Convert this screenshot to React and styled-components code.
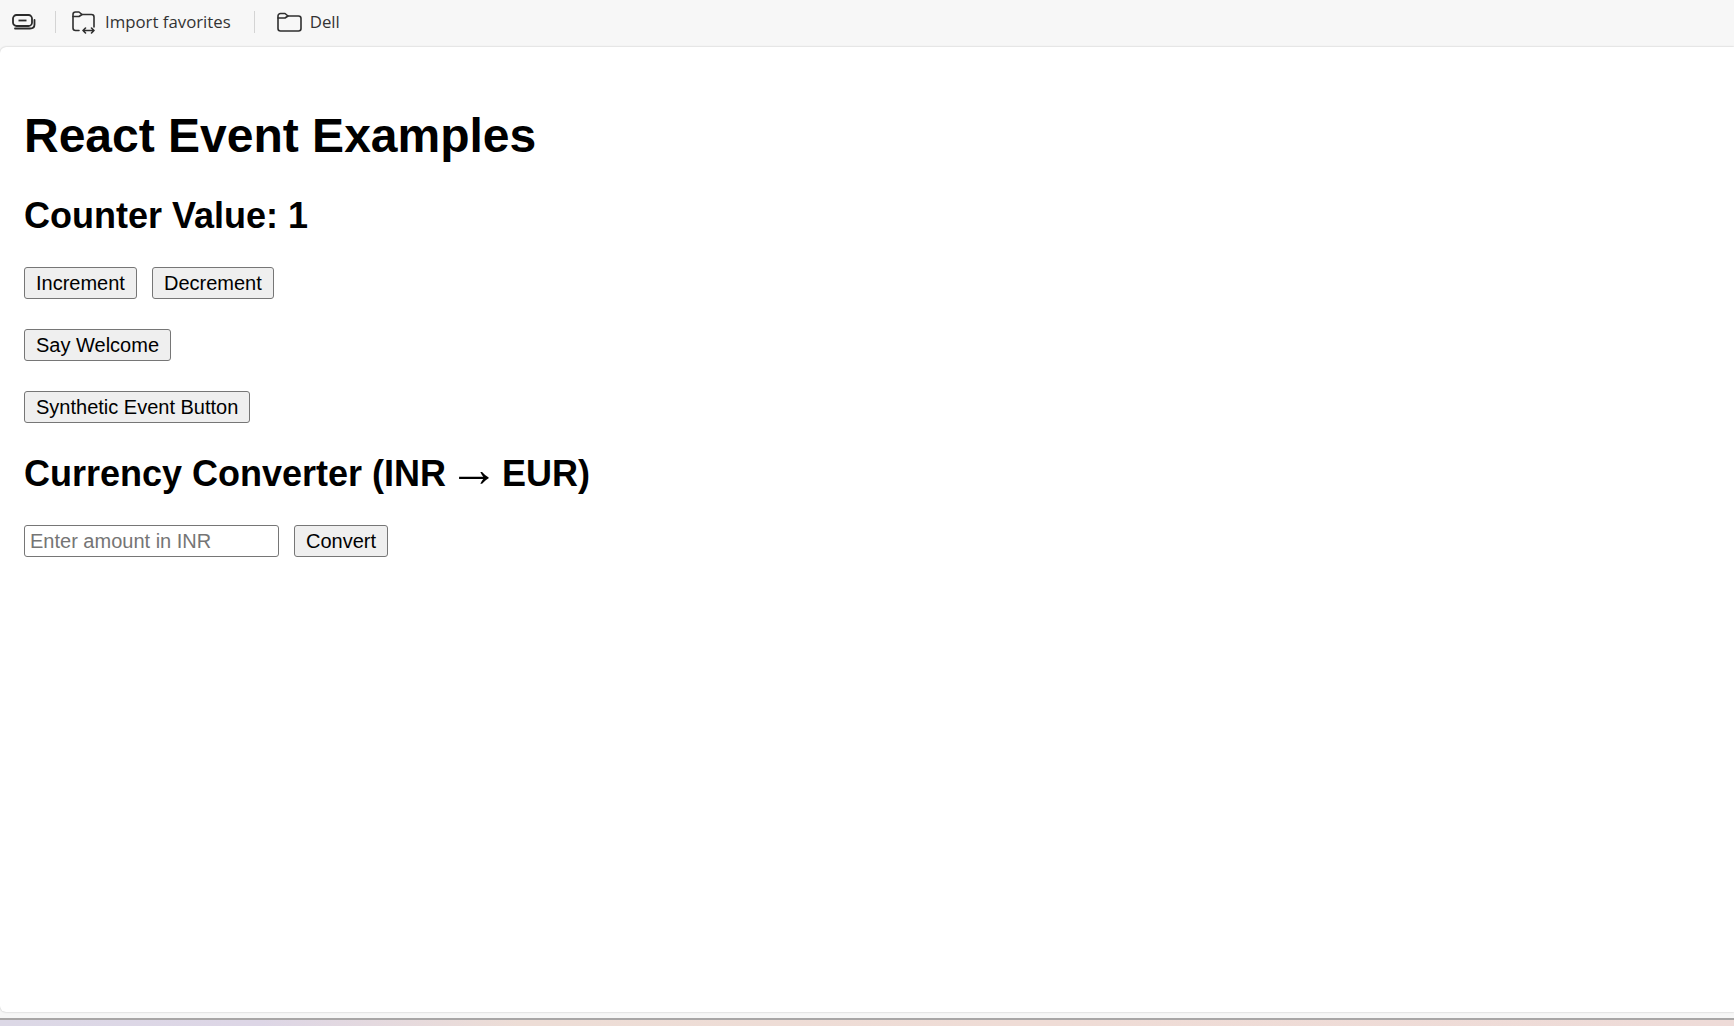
import React from "react";
import styled, { createGlobalStyle } from "styled-components";

const GlobalStyle = createGlobalStyle`
  html, body {
    margin: 0;
    padding: 0;
    background: #f7f7f7;
  }
`;

const Window = styled.div`
  display: flex;
  flex-direction: column;
  width: 1734px;
  height: 1026px;
  overflow: hidden;
  background: #f7f7f7;
`;

const FavoritesBar = styled.div`
  display: flex;
  align-items: center;
  box-sizing: border-box;
  height: 47px;
  padding: 0 0 4px 12px;
  flex-shrink: 0;
  font-family: "Open Sans", "Noto Sans", sans-serif;
  font-size: 16.8px;
  color: #333;
`;

const BarItem = styled.div`
  display: flex;
  align-items: center;
  gap: 8px;
`;

const Divider = styled.div`
  width: 1px;
  height: 22px;
  background: #d4d4d4;
  margin: ${props => props.$margin};
`;

const Page = styled.div`
  flex: 1;
  background: #fff;
  border-radius: 6px 0 0 6px;
  box-shadow: 0 0 2px rgba(0, 0, 0, 0.25);
  padding: 29px 24px;
  font-family: "Liberation Sans", Arial, sans-serif;
  color: #000;
`;

const Title = styled.h1`
  font-size: 48px;
  font-weight: 700;
  margin: 32px 0;
`;

const Subtitle = styled.h2`
  font-size: 36px;
  font-weight: 700;
  margin: 30px 0;
`;

const Arrow = styled.span`
  display: inline-block;
  width: 56px;
  text-align: center;
  font-family: "Liberation Serif", serif;
  font-size: 50px;
  font-weight: 400;
  line-height: 0;
`;

const Row = styled.div`
  display: flex;
  gap: 15px;
  margin: 30px 0;
`;

const Button = styled.button`
  height: 32px;
  padding: 0 11px;
  font-family: "Liberation Sans", Arial, sans-serif;
  font-size: 20px;
  color: #000;
  background: #efefef;
  border: 1.5px solid #767676;
  border-radius: 3px;
`;

const AmountInput = styled.input`
  box-sizing: border-box;
  width: 255px;
  height: 32px;
  padding: 0 5px;
  font-family: "Liberation Sans", Arial, sans-serif;
  font-size: 20px;
  background: #fff;
  border: 1.5px solid #767676;
  border-radius: 3px;
  &::placeholder {
    color: #757575;
  }
`;

const PageEdge = styled.div`
  height: 6px;
  flex-shrink: 0;
`;

const Wallpaper = styled.div`
  height: 8px;
  flex-shrink: 0;
  border-top: 2px solid #a8a6a6;
  box-sizing: border-box;
  background: linear-gradient(90deg, #dcd8e6 0%, #ddd6e6 15%, #edddd6 30%, #efdcd6 60%, #eedbd8 100%);
`;

const TabsIcon = () => (
  <svg width="24" height="18" viewBox="0 0 24 18" fill="none" stroke="#2b2b2b" strokeWidth="1.8">
    <rect x="1" y="2" width="19" height="11" rx="3.5" />
    <path d="M6.500 7.500h8" />
    <path d="M3 15.500h15c2.500 0 4.500-1.500 4.500-4V7" strokeLinecap="round" />
  </svg>
);

const ImportIcon = () => (
  <svg width="26" height="24" viewBox="0 0 26 24" fill="none" stroke="#2f2f2f" strokeWidth="1.6" strokeLinecap="round" strokeLinejoin="round">
    <path d="M8 20.500H4.500A2.500 2.500 0 0 1 2 18V4.500A2.500 2.500 0 0 1 4.500 2h3.500l3 2.500h9.500A2.500 2.500 0 0 1 23 7v10" />
    <path d="M2 6.500h6l3-2" />
    <path d="M12 20.500h11M14.500 18 12 20.500l2.500 2.500M20.500 18 23 20.500 20.500 23" />
  </svg>
);

const FolderIcon = () => (
  <svg width="25" height="22" viewBox="0 0 25 22" fill="none" stroke="#2f2f2f" strokeWidth="1.6" strokeLinecap="round" strokeLinejoin="round">
    <path d="M1 5a2.500 2.500 0 0 1 2.500-2.500H8L11 5h10.500A2.500 2.500 0 0 1 24 7.500v10a2.500 2.500 0 0 1-2.500 2.500h-18A2.500 2.500 0 0 1 1 17.500Z" />
    <path d="M1 7h7l3-2" />
  </svg>
);

const App = () => {
  return (
    <Window>
      <GlobalStyle />
      <FavoritesBar>
        <TabsIcon />
        <Divider $margin="0 15px 0 19px" />
        <BarItem>
          <ImportIcon />
          Import favorites
        </BarItem>
        <Divider $margin="0 22px 0 23px" />
        <BarItem>
          <FolderIcon />
          Dell
        </BarItem>
      </FavoritesBar>
      <Page>
        <Title>React Event Examples</Title>
        <Subtitle>Counter Value: 1</Subtitle>
        <Row>
          <Button>Increment</Button>
          <Button>Decrement</Button>
        </Row>
        <Row>
          <Button>Say Welcome</Button>
        </Row>
        <Row>
          <Button>Synthetic Event Button</Button>
        </Row>
        <Subtitle>
          Currency Converter (INR<Arrow>→</Arrow>EUR)
        </Subtitle>
        <Row>
          <AmountInput placeholder="Enter amount in INR" />
          <Button>Convert</Button>
        </Row>
      </Page>
      <PageEdge />
      <Wallpaper />
    </Window>
  );
};

export default App;
